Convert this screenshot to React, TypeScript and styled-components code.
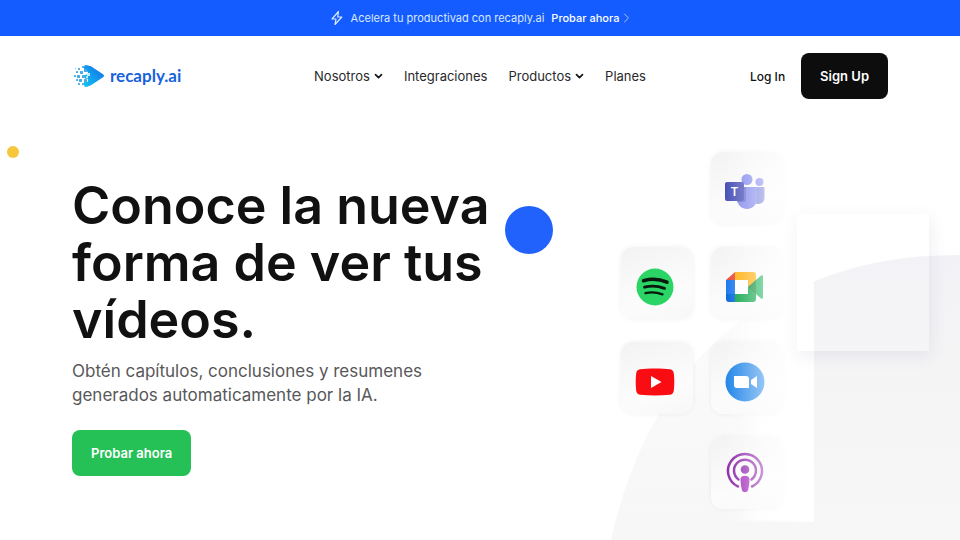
import React from "react";
import styled, { createGlobalStyle } from "styled-components";

const GlobalStyle = createGlobalStyle`
  *, *::before, *::after { box-sizing: border-box; }
  body {
    margin: 0;
    background: #fff;
    color: #111;
    font-family: Inter, "Noto Sans", sans-serif;
    font-size: 13px;
  }
  button { font-family: inherit; cursor: pointer; }
  a { color: inherit; text-decoration: none; }
  h1, p { margin: 0; }
`;

const Page = styled.div`
  display: flex;
  flex-direction: column;
  min-height: 100vh;
`;

const Banner = styled.aside`
  display: flex;
  align-items: center;
  justify-content: center;
  gap: 7px;
  height: 36px;
  background: #145cff;
  color: #d8e8ff;
  font-size: 11px;
`;

const BannerLink = styled.a`
  display: inline-flex;
  align-items: center;
  gap: 4px;
  color: #fff;
  font-weight: 500;
`;

const Header = styled.header`
  display: grid;
  grid-template-columns: 1fr auto 1fr;
  align-items: center;
  padding: 17px 72px;
`;

const Brand = styled.a`
  display: inline-flex;
  align-items: center;
  justify-self: start;
  gap: 6px;
  color: #1762dc;
  font-family: Lato, sans-serif;
  font-size: 17px;
  font-weight: 700;
  line-height: 20px;
`;

const Nav = styled.nav`
  display: flex;
  align-items: center;
  gap: 21px;
`;

const NavLink = styled.a`
  color: #29292b;
  font-size: 13px;
`;

const NavMenu = styled.button`
  display: inline-flex;
  align-items: center;
  gap: 4px;
  padding: 0;
  border: 0;
  background: none;
  color: #29292b;
  font-size: 13px;
`;

const Actions = styled.div`
  display: flex;
  align-items: center;
  justify-self: end;
  gap: 16px;
`;

const LoginLink = styled.a`
  font-size: 12px;
  font-weight: 500;
`;

const Button = styled.button<{ $tone: "dark" | "green" }>`
  height: 46px;
  padding: 0 19px;
  border: 0;
  border-radius: 8px;
  background: ${(p) => (p.$tone === "dark" ? "#0d0d0d" : "#25c157")};
  color: #fff;
  font-size: 13px;
  font-weight: 600;
`;

const Hero = styled.main`
  position: relative;
  display: grid;
  flex: 1;
  grid-template-columns: minmax(0, 444px) 1fr;
  align-items: start;
  padding: 36px 72px 28px;
  overflow: hidden;
`;

const Copy = styled.section`
  display: flex;
  flex-direction: column;
  align-items: flex-start;
  padding-top: 25px;
`;

const Title = styled.h1`
  font-size: 52px;
  font-weight: 600;
  line-height: 57px;
`;

const Lead = styled.p`
  max-width: 372px;
  margin: 11px 0 23px;
  color: #58585a;
  font-size: 17px;
  line-height: 24px;
`;

const Tiles = styled.section`
  display: flex;
  align-items: center;
  justify-content: center;
  gap: 18px;
`;

const TileColumn = styled.div`
  position: relative;
  display: grid;
  gap: 23px;
`;

const Tile = styled.div<{ $centered?: boolean }>`
  display: grid;
  place-items: center;
  width: 72px;
  height: 72px;
  padding: ${(p) => (p.$centered ? 0 : 8)}px 4px 0 0;
  border-radius: 12px;
  background: linear-gradient(160deg, #f3f3f4, #fcfcfc 65%, #f7f7f7);
  box-shadow: 0 0 5px rgba(0, 0, 0, 0.06);
`;

const Backdrop = styled.svg`
  position: absolute;
  right: 0;
  bottom: 0;
`;

const Fade = styled.div`
  position: absolute;
  top: -6px;
  bottom: -13px;
  left: 12px;
  width: 91px;
  background: linear-gradient(90deg, transparent, rgba(255, 255, 255, 0.6) 50%, rgba(255, 255, 255, 0.95));
`;

const Glass = styled.div`
  position: absolute;
  top: 98px;
  right: 31px;
  width: 132px;
  height: 137px;
  background: rgba(255, 255, 255, 0.12);
  box-shadow: 2px 5px 16px rgba(80, 80, 130, 0.09);
`;

const Dot = styled.span<{ $kind: "blue" | "yellow" }>`
  position: absolute;
  top: ${(p) => (p.$kind === "blue" ? 90 : 30)}px;
  left: ${(p) => (p.$kind === "blue" ? 505 : 7)}px;
  width: ${(p) => (p.$kind === "blue" ? 48 : 12)}px;
  height: ${(p) => (p.$kind === "blue" ? 48 : 12)}px;
  border-radius: 50%;
  background: ${(p) => (p.$kind === "blue" ? "#2062fb" : "#f7c63c")};
`;

const Bolt = () => (
  <svg width="14" height="16" viewBox="0 0 14 16" fill="none" stroke="#d8eaff" strokeWidth="1.2" strokeLinejoin="round" aria-hidden="true">
    <path d="M8.5 1.5 2 9h4l-1 5.5L11.8 7H7.7z" />
  </svg>
);

const ChevronRight = () => (
  <svg width="7" height="10" viewBox="0 0 7 10" fill="none" stroke="#a9ccff" strokeLinecap="round" aria-hidden="true">
    <path d="m1.5 1 4 4-4 4" />
  </svg>
);

const ChevronDown = () => (
  <svg width="9" height="8" viewBox="0 0 9 8" fill="none" stroke="#171717" strokeWidth="1.7" strokeLinecap="round" strokeLinejoin="round" aria-hidden="true">
    <path d="m1.5 2.7 3 3 3-3" />
  </svg>
);

const LOGO_PIXELS = [
  [6, 4, 2], [10, 2, 2], [4, 7, 2], [8, 7, 3], [12, 5, 3], [2, 11, 2], [5, 11, 3], [10, 11, 3],
  [4, 15, 2], [7, 15, 3], [12, 15, 3], [6, 19, 2], [10, 19, 2], [3, 4, 1], [15, 9, 3], [14, 12, 2],
];

const Logo = () => (
  <svg width="32" height="24" viewBox="0 0 32 24" aria-hidden="true">
    <defs>
      <linearGradient id="logo" x1="0" y1="1" x2="1" y2="0">
        <stop stopColor="#12c6f5" />
        <stop offset="1" stopColor="#1469e4" />
      </linearGradient>
    </defs>
    <path d="M12 3.300q0-3 3-2.100l4 1 12 8q2 1.500 0 3l-12 8-4 1.500q-3 .8-3-2v-3h4v-3h-3v-4h3v-3h-4z" fill="url(#logo)" />
    {LOGO_PIXELS.map(([x, y, s]) => (
      <rect key={`${x}-${y}`} x={x} y={y} width={s} height={s} rx=".5" fill={x > 13 ? "#c5edff" : "#45ace9"} />
    ))}
  </svg>
);

const Teams = () => (
  <svg width="40" height="38" viewBox="0 0 40 38" role="img" aria-label="Microsoft Teams">
    <circle cx="34.5" cy="9" r="4" fill="#7b83eb" />
    <path d="M27 14h11.5q1 0 1 1v9q0 7-6.5 7t-6-8z" fill="#7078d8" />
    <circle cx="22" cy="6.500" r="5.500" fill="#7b83eb" />
    <path d="M13 14h18q1 0 1 1v11c0 6-5 10-10 10s-10-4-10-10V15q0-1 1-1z" fill="#7b83eb" />
    <path d="M12 14h9v13q0 2-2 2h-6.600z" fill="#353b94" opacity=".35" />
    <rect y="9" width="19" height="19" rx="2" fill="#454cb5" />
    <text x="9.500" y="23" fill="#fff" fontFamily="Inter, sans-serif" fontSize="12" fontWeight="600" textAnchor="middle">T</text>
  </svg>
);

const Spotify = () => (
  <svg width="38" height="38" viewBox="0 0 38 38" role="img" aria-label="Spotify">
    <circle cx="19" cy="19" r="18.500" fill="#2bd565" />
    <g fill="none" stroke="#07180d" strokeLinecap="round">
      <path d="M7.500 12.700c8-2.200 16.500-1.500 23.500 1.500" strokeWidth="3.500" />
      <path d="M8.500 19.200c7-2 14-1.200 20 1.200" strokeWidth="2.800" />
      <path d="M9.500 25.200c6-1.500 12-.7 17 1.200" strokeWidth="2.300" />
    </g>
  </svg>
);

const Meet = () => (
  <svg width="40" height="32" viewBox="0 0 40 32" role="img" aria-label="Google Meet">
    <path d="M1 9h9v14H1z" fill="#1674ee" />
    <path d="M10 1v8H1z" fill="#ea4335" />
    <path d="M10 1h18q3 0 3 3v12h-8V9H10z" fill="#ffab00" />
    <path d="M23 16h8v12q0 3-3 3H10v-8h13z" fill="#00a040" />
    <path d="M1 23h9v8H4q-3 0-3-3z" fill="#0066da" />
    <path d="m23 16 13-11.500q2-1 2 1v21q0 2-2 1z" fill="#00ac47" />
    <path d="M23 16l8-7v14z" fill="#00832d" />
    <path d="M10 9h13v14H10z" fill="#fff" />
  </svg>
);

const YouTube = () => (
  <svg width="40" height="28" viewBox="0 0 40 28" role="img" aria-label="YouTube">
    <path d="M5 1.200C12 .2 28 .2 35 1.200q3.300.5 3.800 4 1 9 0 17.500-.5 3.500-3.800 4-15 1.400-30 0-3.300-.5-3.800-4-1-8.700 0-17.500.5-3.500 3.800-4z" fill="#f90d12" />
    <path d="M16 8v12l10.500-6z" fill="#fff" />
  </svg>
);

const Zoom = () => (
  <svg width="40" height="40" viewBox="0 0 40 40" role="img" aria-label="Zoom">
    <circle cx="20" cy="20" r="19.500" fill="#1c82e8" />
    <path d="M9 14h12q3 0 3 3v9H12q-3 0-3-3zM26 18l6-4v12l-6-4z" fill="#fff" />
  </svg>
);

const Podcasts = () => (
  <svg width="38" height="42" viewBox="0 0 38 42" role="img" aria-label="Apple Podcasts">
    <g fill="none" stroke="#8c23a8" strokeWidth="2.500" strokeLinecap="round">
      <path d="M12 34.500a17 17 0 1 1 14 0" />
      <path d="M12.500 27.500a11 11 0 1 1 13 0" />
    </g>
    <circle cx="19" cy="17.500" r="4.300" fill="#8f27ae" />
    <path d="M14.500 27c0-4.500 9-4.500 9 0 0 4-.8 9-1.600 11.500-.8 2.300-5 2.300-5.800 0-.8-2.500-1.600-7.500-1.600-11.500z" fill="#a127bb" />
  </svg>
);

const Hill = () => (
  <Backdrop width="350" height="300" viewBox="0 0 350 300" aria-hidden="true">
    <defs>
      <linearGradient id="hill" x1="0" y1="0" x2="0" y2="1">
        <stop stopColor="#f2f2f6" />
        <stop offset=".5" stopColor="#f5f5f5" />
        <stop offset="1" stopColor="#f7f7f7" />
      </linearGradient>
      <linearGradient id="mist" x1="0" y1="0" x2="0" y2="1">
        <stop offset=".2" stopColor="#fff" stopOpacity=".75" />
        <stop offset="1" stopColor="#fff" stopOpacity="0" />
      </linearGradient>
      <linearGradient id="column" x1="0" y1="0" x2="1" y2="0">
        <stop stopColor="#fff" stopOpacity="0" />
        <stop offset=".35" stopColor="#fff" stopOpacity=".9" />
        <stop offset="1" stopColor="#fff" />
      </linearGradient>
    </defs>
    <path d="M1 300C20 213 63 129 132 80 205 32 270 15 350 15v285z" fill="url(#hill)" />
    <path d="M0 0h204v300H0z" fill="url(#mist)" />
    <path d="M128 0h76v280h-76z" fill="url(#column)" />
  </Backdrop>
);

export default function App() {
  return (
    <>
      <GlobalStyle />
      <Page>
        <Banner>
          <Bolt />
          <span>Acelera tu productivad con recaply.ai</span>
          <BannerLink href="#probar">Probar ahora <ChevronRight /></BannerLink>
        </Banner>
        <Header>
          <Brand href="#inicio"><Logo />recaply.ai</Brand>
          <Nav aria-label="Principal">
            <NavMenu type="button" aria-haspopup="true">Nosotros <ChevronDown /></NavMenu>
            <NavLink href="#integraciones">Integraciones</NavLink>
            <NavMenu type="button" aria-haspopup="true">Productos <ChevronDown /></NavMenu>
            <NavLink href="#planes">Planes</NavLink>
          </Nav>
          <Actions>
            <LoginLink href="#login">Log In</LoginLink>
            <Button type="button" $tone="dark">Sign Up</Button>
          </Actions>
        </Header>
        <Hero>
          <Hill />
          <Dot $kind="yellow" />
          <Dot $kind="blue" />
          <Copy>
            <Title>Conoce la nueva forma de ver tus vídeos.</Title>
            <Lead>Obtén capítulos, conclusiones y resumenes generados automaticamente por la IA.</Lead>
            <Button type="button" $tone="green">Probar ahora</Button>
          </Copy>
          <Tiles aria-label="Integraciones disponibles">
            <TileColumn>
              <Tile><Spotify /></Tile>
              <Tile><YouTube /></Tile>
            </TileColumn>
            <TileColumn>
              <Tile><Teams /></Tile>
              <Tile><Meet /></Tile>
              <Tile><Zoom /></Tile>
              <Tile $centered><Podcasts /></Tile>
              <Fade />
            </TileColumn>
          </Tiles>
          <Glass />
        </Hero>
      </Page>
    </>
  );
}
